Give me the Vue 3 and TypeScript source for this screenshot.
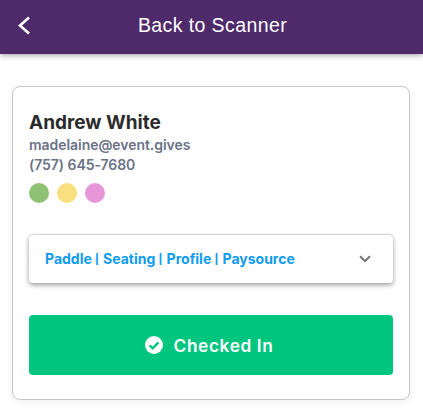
<script setup lang="ts">
const dots: string[] = ['#8fc175', '#f9df7f', '#e796d8']
const sections: string[] = ['Paddle', 'Seating', 'Profile', 'Paysource']
</script>

<template>
  <div class="page">
    <header class="bar">
      <svg class="back" width="14" height="20" viewBox="0 0 14 20" fill="none">
        <path d="M12 1.5 L3 9.5 L12 17.5" stroke="#fff" stroke-width="2.6" />
      </svg>
      <span class="bar-title">Back to Scanner</span>
    </header>
    <main class="content">
      <section class="card">
        <h1 class="name">Andrew White</h1>
        <div class="meta">madelaine@event.gives</div>
        <div class="meta">(757) 645-7680</div>
        <div class="dots">
          <span v-for="c in dots" :key="c" class="dot" :style="{ background: c }"></span>
        </div>
        <div class="panel">
          <span class="panel-text">
            <template v-for="(s, i) in sections" :key="s"><span v-if="i" class="sep"> | </span>{{ s }}</template>
          </span>
          <svg width="12" height="8" viewBox="0 0 12 8" fill="none">
            <path d="M1 1.2 L6 6 L11 1.2" stroke="#757575" stroke-width="2" />
          </svg>
        </div>
        <button class="checked">
          <svg width="18" height="18" viewBox="0 0 18 18">
            <circle cx="9" cy="9" r="9" fill="#fff" />
            <path d="M4.6 9.4 L7.7 12.4 L13.4 6.4" fill="none" stroke="#00c57f" stroke-width="2.4" />
          </svg>
          <span>Checked In</span>
        </button>
      </section>
    </main>
  </div>
</template>

<style>
html, body { margin: 0; background: #fff; }
</style>

<style scoped>
.page { width: 423px; height: 410px; overflow: hidden; font-family: Inter, "Liberation Sans", sans-serif; }
.bar {
  height: 54px; box-sizing: border-box; padding-bottom: 4px; background: #4f2a6b; display: flex; align-items: center; justify-content: center;
  position: relative; box-shadow: 0 2px 5px rgba(0,0,0,.3);
}
.back { position: absolute; left: 17px; top: 16px; }
.bar-title { color: #fff; font: 19.5px "Liberation Sans", Arial, sans-serif; letter-spacing: .4px; margin-left: 2px; }
.content { padding: 32px 13px 0 12px; }
.card {
  box-sizing: border-box; height: 314px; border: 1px solid #c6c6c6; border-radius: 8px; background: #fff;
  padding: 24px 16px 0; box-shadow: 0 2px 10px rgba(0,0,0,.06);
}
.name { margin: 0; font-size: 19px; line-height: 24px; font-weight: 700; color: #2b2b2b; }
.meta { font-size: 14px; line-height: 20px; font-weight: 600; color: #6b7288; letter-spacing: -.05px; }
.dots { display: flex; gap: 8px; margin-top: 8px; }
.dot { width: 20px; height: 20px; border-radius: 50%; }
.panel {
  margin-top: 32px; height: 48px; display: flex; align-items: center; justify-content: space-between;
  padding: 0 22px 0 16px; border-radius: 4px; background: #fff;
  box-shadow: 0 -1px 1px rgba(0,0,0,.12), 0 2px 5px rgba(0,0,0,.4);
}
.panel-text { font-size: 14px; font-weight: 700; color: #0f9bf0; white-space: pre; position: relative; top: -1px; }
.sep { font-size: 10px; font-weight: 800; letter-spacing: 1px; position: relative; top: -1px; }
.checked {
  margin-top: 32px; width: 100%; height: 60px; border: 0; border-radius: 4px; background: #00c57f; color: #fff;
  padding: 0 4px 0 0; display: flex; align-items: center; justify-content: center; gap: 11px;
  font: 600 17.3px Inter, "Liberation Sans", sans-serif; letter-spacing: .6px;
}
</style>
